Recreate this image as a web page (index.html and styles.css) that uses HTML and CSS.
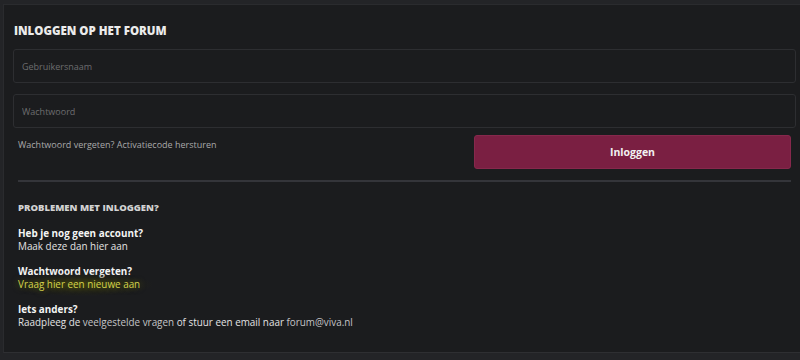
FILE: index.html
```html
<!DOCTYPE html>
<html lang="nl">

<head>
    <meta charset="UTF-8">
    <meta name="viewport" content="width=device-width, initial-scale=1.0">
    <title>Inloggen op het forum</title>
    <link rel="stylesheet" href="styles.css">
</head>

<body>
    <div class="panel">
        <h2 class="title">Inloggen op het forum</h2>
        <form class="login-form">
            <input type="text" class="field" placeholder="Gebruikersnaam">
            <input type="password" class="field" placeholder="Wachtwoord">
            <div class="form-row">
                <p class="forgot">Wachtwoord vergeten? Activatiecode hersturen</p>
                <button type="button" class="login-btn">Inloggen</button>
            </div>
        </form>

        <div class="help">
            <h3 class="help-title">Problemen met inloggen?</h3>
            <div class="help-item">
                <strong>Heb je nog geen account?</strong>
                <span>Maak deze dan hier aan</span>
            </div>
            <div class="help-item">
                <strong>Wachtwoord vergeten?</strong>
                <span class="highlight">Vraag hier een nieuwe aan</span>
            </div>
            <div class="help-item">
                <strong>Iets anders?</strong>
                <span>Raadpleeg de <a href="#" class="soft">veelgestelde vragen</a> of stuur een email naar <a href="#" class="soft">forum@viva.nl</a></span>
            </div>
        </div>
    </div>
</body>

</html>
```

FILE: styles.css
```css
body {
    margin: 0;
    background: #232427;
    font-family: 'Open Sans', sans-serif;
    color: #e6e6e6;
    overflow: hidden;
    height: 360px;
}

.panel {
    margin: 4px 0 0 3px;
    height: 349px;
    box-sizing: border-box;
    background: #1b1c1e;
    border-left: 1px solid #2a2b2e;
    border-top: 1px solid #2a2b2e;
    border-bottom: 1px solid #2e2f32;
    padding: 18px 9px 0 9px;
}

.title {
    margin: 0 0 10px 1px;
    font-size: 11.5px;
    font-weight: 800;
    text-transform: uppercase;
    color: #ebebeb;
    line-height: 16px;
}

.login-form {
    display: flex;
    flex-direction: column;
    gap: 11px;
}

.field {
    display: block;
    width: 783px;
    height: 34px;
    box-sizing: border-box;
    background: #1b1c1e;
    border: 1px solid #2d2e31;
    border-radius: 3px;
    padding: 0 8px;
    font-family: 'Open Sans', sans-serif;
    font-size: 9px;
    color: #ddd;
}

.field::placeholder {
    color: #6d6d6f;
}

.form-row {
    display: flex;
    justify-content: space-between;
    align-items: flex-start;
    margin-top: -4px;
    padding: 0 0 0 5px;
}

.forgot {
    margin: 3px 0 0;
    font-size: 9px;
    line-height: 13px;
    color: #a9a9aa;
}

.login-btn {
    width: 317px;
    height: 34px;
    background: #7a1f42;
    border: 1px solid #86284c;
    border-radius: 3px;
    color: #f2f2f2;
    font-family: 'Open Sans', sans-serif;
    font-size: 10.5px;
    font-weight: 700;
    cursor: pointer;
}

.help {
    margin: 11px 0 0 5px;
    padding-top: 19px;
    border-top: 2px solid #34353a;
}

.help-title {
    margin: 0 0 13px;
    font-size: 9.5px;
    line-height: 13px;
    font-weight: 800;
    text-transform: uppercase;
    color: #d2d2d2;
}

.help-item {
    display: flex;
    flex-direction: column;
    font-size: 9.9px;
    line-height: 13px;
    margin-bottom: 12px;
    color: #e3e3e3;
}

.help-item strong {
    font-weight: 700;
    color: #f4f4f4;
}

.highlight {
    color: #d3d24a;
    text-shadow: 0 0 6px rgba(140, 140, 20, 0.5);
    align-self: flex-start;
    background: radial-gradient(ellipse at center, rgba(66, 66, 14, 0.75) 0%, rgba(45, 46, 20, 0.4) 45%, rgba(27, 28, 30, 0) 72%);
    padding: 5px 12px 5px 9px;
    margin: -5px 0 -5px -9px;
}

.soft {
    color: #c4c4c6;
    text-decoration: none;
}
```
